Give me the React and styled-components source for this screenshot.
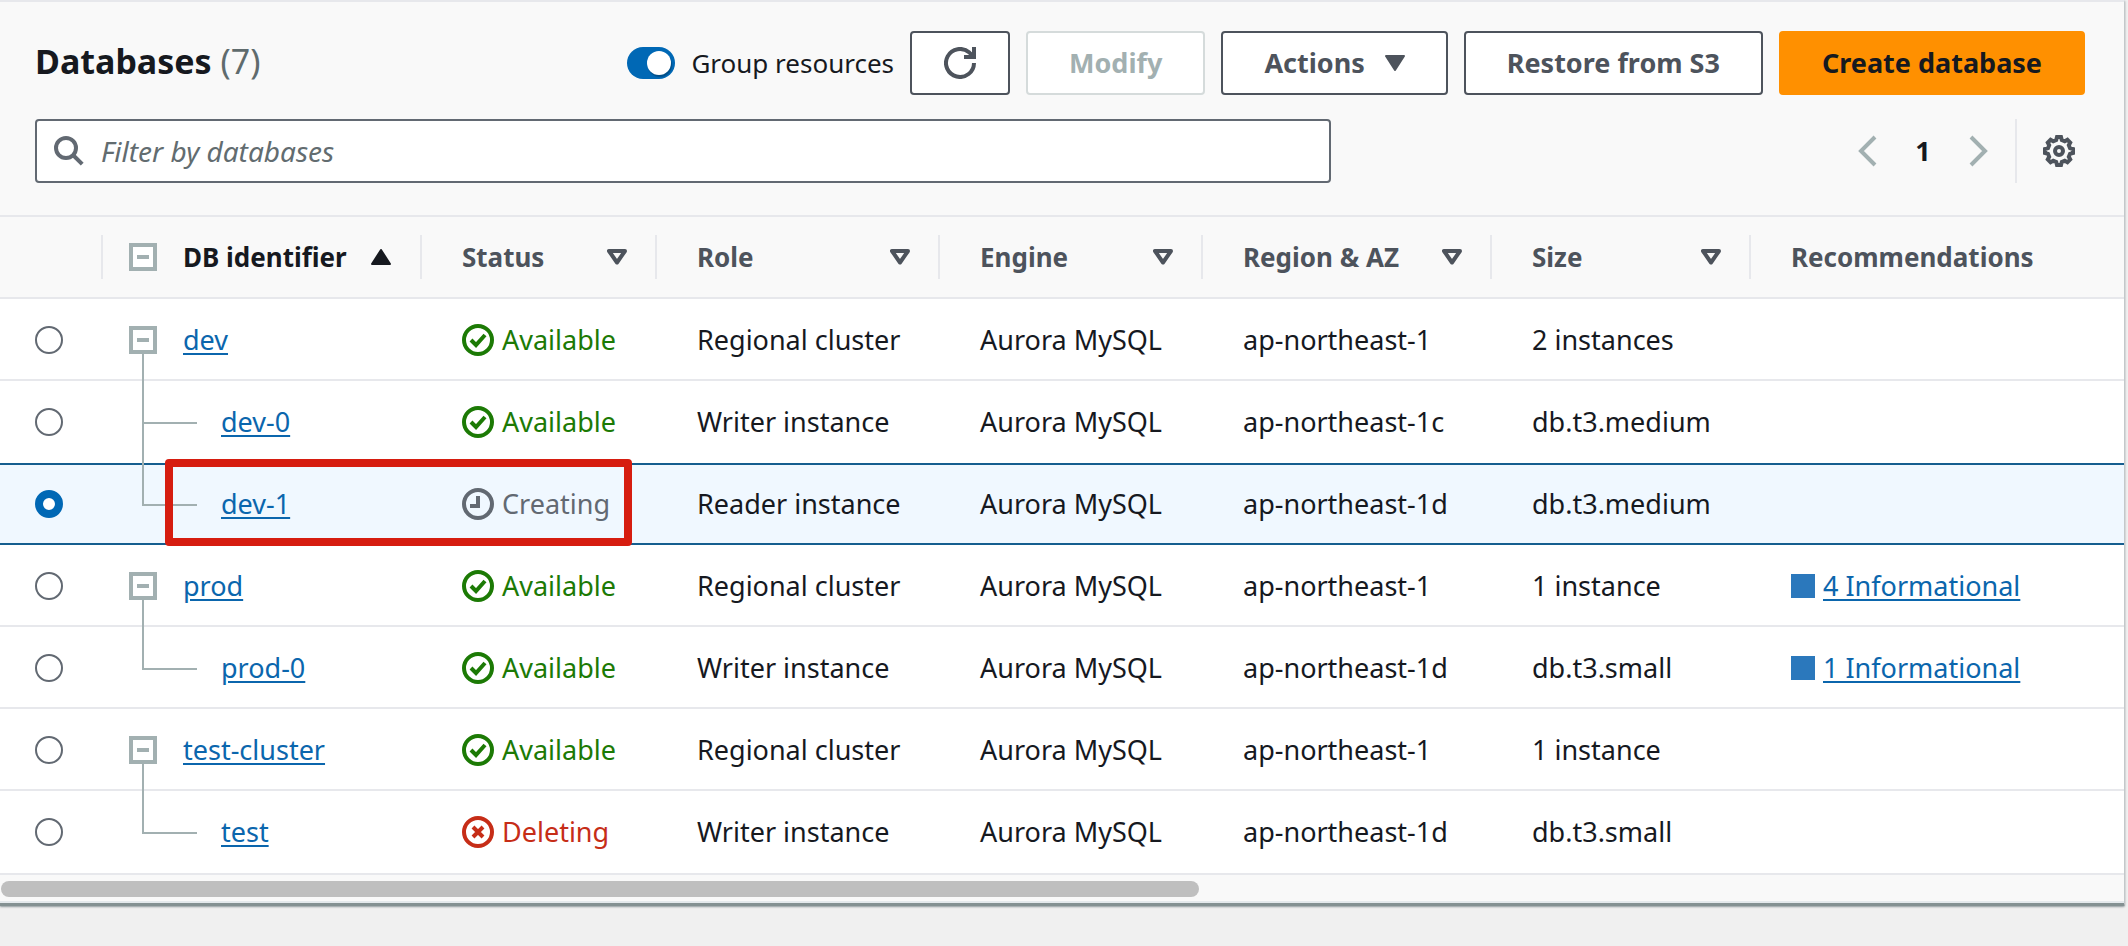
import React from "react";
import styled, { createGlobalStyle, css } from "styled-components";

const GlobalStyle = createGlobalStyle`
  *, *::before, *::after { box-sizing: border-box; }
  body {
    margin: 0;
    background: #f0f0f0;
    color: #16191f;
    font-family: "Noto Sans", "Open Sans", sans-serif;
    font-size: 27px;
    line-height: 36px;
  }
  button, input { font: inherit; }
`;

const Page = styled.main`
  min-height: 100vh;
  padding-right: 3px;
`;

const Panel = styled.section`
  background: #f9f9f9;
  border-top: 2px solid #e7e8ec;
  border-right: 1px solid #c3c8ca;
  border-bottom: 3px solid #849192;
  border-radius: 0 0 2px 0;
  box-shadow: 0 1px 2px rgba(0, 28, 36, 0.4);
`;

const Header = styled.header`
  display: flex;
  flex-direction: column;
  gap: 24px;
  padding: 29px 39px 32px 35px;
`;

const TitleBar = styled.div`
  display: flex;
  align-items: center;
  justify-content: space-between;
`;

const Title = styled.h2`
  margin: 0;
  padding-bottom: 4px;
  font-size: 34px;
  line-height: 44px;
  font-weight: 700;
`;

const Counter = styled.span`
  color: #5f6b6d;
  font-weight: 400;
`;

const Actions = styled.div`
  display: flex;
  align-items: center;
  gap: 16px;
`;

const ToggleLabel = styled.label`
  display: flex;
  align-items: center;
  gap: 16px;
  font-size: 26px;
`;

const Toggle = styled.input`
  appearance: none;
  display: flex;
  width: 48px;
  height: 32px;
  margin: 0;
  padding: 4px;
  border-radius: 16px;
  background: #0068b5;
  justify-content: flex-end;
  &::before {
    content: "";
    width: 24px;
    height: 24px;
    border-radius: 50%;
    background: #fff;
    box-shadow: 1px 2px 1px rgba(0, 0, 0, 0.25);
  }
`;

const Button = styled.button`
  display: flex;
  align-items: center;
  justify-content: center;
  gap: 20px;
  height: 64px;
  min-width: 100px;
  padding: 0 41px;
  border: 2px solid #4d535c;
  border-radius: 4px;
  background: #fff;
  color: #4d535c;
  font-weight: 700;
  white-space: nowrap;
  ${(p) => p.$icon && css`padding: 0;`}
  ${(p) => p.$primary && css`
    border-color: #ff9000;
    background: #ff9000;
    color: #16191f;
  `}
  &:disabled {
    border-color: #d5dbdb;
    color: #a2b0b1;
  }
`;

const ToolRow = styled.div`
  display: flex;
  align-items: center;
  justify-content: space-between;
`;

const SearchBox = styled.label`
  display: flex;
  align-items: center;
  gap: 16px;
  width: calc(64% - 16px);
  height: 64px;
  padding: 0 16px;
  border: 2px solid #626972;
  border-radius: 4px;
  background: #fff;
  color: #626972;
`;

const SearchInput = styled.input`
  flex: 1;
  min-width: 0;
  padding: 0;
  border: 0;
  outline: 0;
  background: transparent;
  color: #16191f;
  font-size: 28px;
  &::placeholder {
    color: #626c70;
    font-style: italic;
    opacity: 1;
  }
`;

const Pagination = styled.nav`
  display: flex;
  align-items: center;
  height: 64px;
`;

const PlainButton = styled.button`
  display: flex;
  align-items: center;
  justify-content: center;
  width: ${(p) => p.$width || 56}px;
  height: 64px;
  padding: 0;
  border: 0;
  background: none;
  color: ${(p) => p.$color || "#4d535c"};
  font-weight: 700;
`;

const Preferences = styled.div`
  margin-left: 8px;
  padding-left: 16px;
  border-left: 2px solid #e7e8ec;
`;

const Table = styled.table`
  width: 100%;
  table-layout: fixed;
  border-spacing: 0;
  border-top: 2px solid #e7e8ec;
`;

const Col = styled.col`
  width: ${(p) => p.$width}px;
`;

const Th = styled.th`
  height: 82px;
  padding: 0;
  border-bottom: 2px solid #e7e8ec;
  color: ${(p) => (p.$active ? "#16191f" : "#4d535c")};
  text-align: left;
  font-size: 26px;
  font-weight: 700;
  white-space: nowrap;
`;

const ThInner = styled.div`
  display: flex;
  align-items: center;
  justify-content: ${(p) => (p.$tree ? "flex-start" : "space-between")};
  gap: ${(p) => (p.$tree ? 26 : 0)}px;
  height: 44px;
  padding: 0 28px 0 ${(p) => (p.$tree ? 26 : 40)}px;
  border-right: ${(p) => (p.$last ? 0 : 2)}px solid #e7e8ec;
`;

const SortLabel = styled.span`
  display: flex;
  align-items: center;
  gap: 24px;
`;

const Row = styled.tr`
  --line: ${(p) => (p.$selected ? "#155e8f" : p.$beforeSelected ? "transparent" : "#e7e8ec")};
  background: ${(p) => (p.$selected ? "#f0f8ff" : "#fff")};
`;

const Td = styled.td`
  position: relative;
  height: ${(p) => (p.$lastRow ? 84 : 82)}px;
  padding: ${(p) => (p.$selected || p.$lastRow ? 0 : 2)}px 0 0 ${(p) => p.$pad ?? 40}px;
  border-top: ${(p) => (p.$selected ? 2 : 0)}px solid var(--line);
  border-bottom: 2px solid var(--line);
  white-space: nowrap;
`;

const Radio = styled.input`
  appearance: none;
  display: block;
  width: 28px;
  height: 28px;
  margin: 0;
  border: 2px solid #626972;
  border-radius: 50%;
  background: #fff;
  &:checked { border: 8px solid #0068b5; }
`;

const TreeCell = styled.div`
  display: flex;
  align-items: center;
  gap: 26px;
`;

const Expander = styled.button`
  display: flex;
  align-items: center;
  justify-content: center;
  flex: none;
  width: 28px;
  height: 28px;
  padding: 0;
  border: 4px solid #a2b0b1;
  background: #fff;
  &::before {
    content: "";
    width: 12px;
    height: 4px;
    background: #a2b0b1;
  }
`;

const Stem = styled.span`
  position: absolute;
  left: 39px;
  top: 55px;
  bottom: -2px;
  z-index: 1;
  width: 2px;
  background: #a2b0b1;
`;

const Branch = styled.span`
  position: absolute;
  left: 39px;
  top: ${(p) => (p.$selected ? -4 : -2)}px;
  z-index: 1;
  width: 55px;
  height: 45px;
  border-left: 2px solid #a2b0b1;
  border-bottom: 2px solid #a2b0b1;
`;

const Continuation = styled(Branch)`
  top: 40px;
  width: 2px;
  border-bottom: 0;
`;

const Link = styled.a`
  color: #0b66ad;
  text-decoration: underline;
  text-decoration-thickness: 2px;
  text-underline-offset: 3px;
`;

const ChildLink = styled(Link)`
  margin-left: 92px;
`;

const Status = styled.span`
  display: flex;
  align-items: center;
  gap: 8px;
  color: ${(p) => p.$color};
`;

const Recommendation = styled.span`
  display: flex;
  align-items: center;
  gap: 8px;
`;

const Swatch = styled.span`
  width: 24px;
  height: 24px;
  background: #2b78bc;
`;

const Highlight = styled.div`
  position: absolute;
  left: 62px;
  top: -6px;
  z-index: 2;
  width: 467px;
  height: 87px;
  border: 8px solid #d61d10;
  border-radius: 4px;
  pointer-events: none;
`;

const ScrollTrack = styled.div`
  padding: 6px 1px 4px;
  border-bottom: 2px solid #e4e9ec;
`;

const ScrollThumb = styled.div`
  width: calc(57% - 12px);
  height: 16px;
  border-radius: 8px;
  background: #bfbfbf;
`;

const Caret = ({ up, hollow }) => (
  <svg width="20" height="16" viewBox="0 0 20 16" aria-hidden="true">
    {hollow ? (
      <path d="M2 2h16l-8 11.5z" fill="none" stroke="currentColor" strokeWidth="4" strokeLinejoin="round" />
    ) : (
      <path
        d={up ? "M1 15h18L10 1z" : "M1 1h18l-9 14z"}
        fill="currentColor"
        stroke="currentColor"
        strokeWidth="2"
        strokeLinejoin="round"
      />
    )}
  </svg>
);

const Icon = ({ children, size = 32 }) => (
  <svg
    width={size}
    height={size}
    viewBox="0 0 16 16"
    fill="none"
    stroke="currentColor"
    strokeWidth="2"
    aria-hidden="true"
  >
    {children}
  </svg>
);

const RefreshIcon = () => (
  <Icon>
    <path d="M15 8a7 7 0 1 1-2.3-5.2L15 5" />
    <path d="M15 0v5h-5" />
  </Icon>
);

const SearchIcon = () => (
  <Icon>
    <circle cx="6.5" cy="6.5" r="5" />
    <path d="M10 10l4.6 4.6" />
  </Icon>
);

const ChevronIcon = ({ right }) => (
  <Icon>
    <path d={right ? "M4 1l7 7-7 7" : "M12 1L5 8l7 7"} />
  </Icon>
);

const GearIcon = () => (
  <Icon>
    <path d="M7 1H9L9.4 2.5L10.9 3.1L12.2 2.4L13.6 3.8L12.9 5.1L13.5 6.6L15 7V9L13.5 9.4L12.9 10.9L13.6 12.2L12.2 13.6L10.9 12.9L9.4 13.5L9 15H7L6.6 13.5L5.1 12.9L3.8 13.6L2.4 12.2L3.1 10.9L2.5 9.4L1 9V7L2.5 6.6L3.1 5.1L2.4 3.8L3.8 2.4L5.1 3.1L6.6 2.5Z" />
    <circle cx="8" cy="8" r="2" />
  </Icon>
);

const statuses = {
  Available: { color: "#1c7a05", path: "M4.5 8l2.5 2.5L11.5 5.5" },
  Creating: { color: "#626972", path: "M8 4v5H4" },
  Deleting: { color: "#c62d17", path: "M5.5 5.5l5 5M10.5 5.5l-5 5" },
};

const columns = [
  { label: "Status", width: 235 },
  { label: "Role", width: 283 },
  { label: "Engine", width: 263 },
  { label: "Region & AZ", width: 289 },
  { label: "Size", width: 259 },
];

const rows = [
  { id: "dev", status: "Available", role: "Regional cluster", region: "ap-northeast-1", size: "2 instances" },
  { id: "dev-0", child: true, more: true, status: "Available", role: "Writer instance", region: "ap-northeast-1c", size: "db.t3.medium" },
  { id: "dev-1", child: true, status: "Creating", role: "Reader instance", region: "ap-northeast-1d", size: "db.t3.medium" },
  { id: "prod", status: "Available", role: "Regional cluster", region: "ap-northeast-1", size: "1 instance", info: "4 Informational" },
  { id: "prod-0", child: true, status: "Available", role: "Writer instance", region: "ap-northeast-1d", size: "db.t3.small", info: "1 Informational" },
  { id: "test-cluster", status: "Available", role: "Regional cluster", region: "ap-northeast-1", size: "1 instance" },
  { id: "test", child: true, status: "Deleting", role: "Writer instance", region: "ap-northeast-1d", size: "db.t3.small" },
];

function DatabaseRow({ row, selected, beforeSelected, lastRow, onSelect }) {
  const cell = { $selected: selected, $lastRow: lastRow };
  const status = statuses[row.status];
  return (
    <Row $selected={selected} $beforeSelected={beforeSelected}>
      <Td {...cell} $pad={35}>
        <Radio type="radio" name="database" aria-label={row.id} checked={selected} onChange={onSelect} />
      </Td>
      <Td {...cell} $pad={26}>
        {row.child ? (
          <>
            <Branch $selected={selected} />
            {row.more && <Continuation />}
            <ChildLink href="#">{row.id}</ChildLink>
          </>
        ) : (
          <TreeCell>
            <Expander aria-label={`Collapse ${row.id}`} />
            <Stem />
            <Link href="#">{row.id}</Link>
          </TreeCell>
        )}
        {row.id === "dev-1" && <Highlight />}
      </Td>
      <Td {...cell}>
        <Status $color={status.color}>
          <Icon>
            <circle cx="8" cy="8" r="7" />
            <path d={status.path} />
          </Icon>
          {row.status}
        </Status>
      </Td>
      <Td {...cell}>{row.role}</Td>
      <Td {...cell}>Aurora MySQL</Td>
      <Td {...cell}>{row.region}</Td>
      <Td {...cell}>{row.size}</Td>
      <Td {...cell}>
        {row.info && (
          <Recommendation>
            <Swatch />
            <Link href="#">{row.info}</Link>
          </Recommendation>
        )}
      </Td>
    </Row>
  );
}

export default function App() {
  const [selected, setSelected] = React.useState("dev-1");
  const [grouped, setGrouped] = React.useState(true);
  const selectedIndex = rows.findIndex((r) => r.id === selected);
  return (
    <Page>
      <GlobalStyle />
      <Panel>
        <Header>
          <TitleBar>
            <Title>
              Databases <Counter>(7)</Counter>
            </Title>
            <Actions>
              <ToggleLabel>
                <Toggle type="checkbox" role="switch" checked={grouped} onChange={() => setGrouped(!grouped)} />
                Group resources
              </ToggleLabel>
              <Button $icon aria-label="Refresh">
                <RefreshIcon />
              </Button>
              <Button disabled>Modify</Button>
              <Button>
                Actions <Caret />
              </Button>
              <Button>Restore from S3</Button>
              <Button $primary>Create database</Button>
            </Actions>
          </TitleBar>
          <ToolRow>
            <SearchBox>
              <SearchIcon />
              <SearchInput type="text" placeholder="Filter by databases" aria-label="Filter by databases" />
            </SearchBox>
            <Pagination aria-label="Pages">
              <PlainButton $color="#a2b0b1" aria-label="Previous page">
                <ChevronIcon />
              </PlainButton>
              <PlainButton $color="#16191f">1</PlainButton>
              <PlainButton $color="#a2b0b1" aria-label="Next page">
                <ChevronIcon right />
              </PlainButton>
              <Preferences>
                <PlainButton $width={52} aria-label="Preferences">
                  <GearIcon />
                </PlainButton>
              </Preferences>
            </Pagination>
          </ToolRow>
        </Header>
        <Table>
          <colgroup>
            <Col $width={103} />
            <Col $width={319} />
            {columns.map((c) => (
              <Col key={c.label} $width={c.width} />
            ))}
            <col />
          </colgroup>
          <thead>
            <tr>
              <Th aria-label="Selection">
                <ThInner />
              </Th>
              <Th $active scope="col">
                <ThInner $tree>
                  <Expander aria-label="Collapse all" />
                  <SortLabel>
                    DB identifier <Caret up />
                  </SortLabel>
                </ThInner>
              </Th>
              {columns.map((c) => (
                <Th key={c.label} scope="col">
                  <ThInner>
                    {c.label} <Caret hollow />
                  </ThInner>
                </Th>
              ))}
              <Th scope="col">
                <ThInner $last>Recommendations</ThInner>
              </Th>
            </tr>
          </thead>
          <tbody>
            {rows.map((row, i) => (
              <DatabaseRow
                key={row.id}
                row={row}
                selected={i === selectedIndex}
                beforeSelected={i + 1 === selectedIndex}
                lastRow={i === rows.length - 1}
                onSelect={() => setSelected(row.id)}
              />
            ))}
          </tbody>
        </Table>
        <ScrollTrack aria-hidden="true">
          <ScrollThumb />
        </ScrollTrack>
      </Panel>
    </Page>
  );
}
